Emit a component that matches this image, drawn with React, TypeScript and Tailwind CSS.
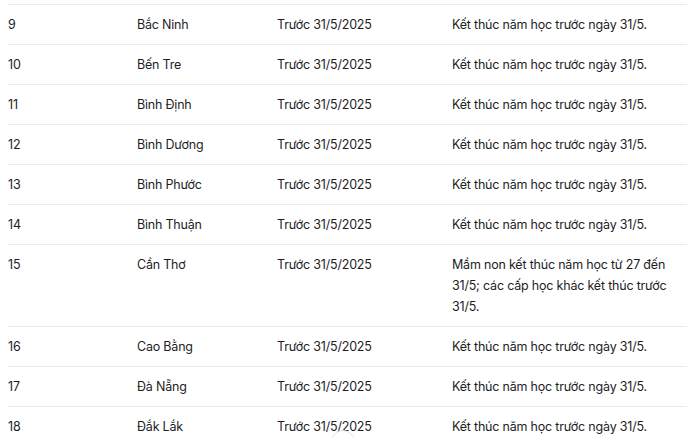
const rows: [string, string, string, string][] = [
  ["9", "Bắc Ninh", "Trước 31/5/2025", "Kết thúc năm học trước ngày 31/5."],
  ["10", "Bến Tre", "Trước 31/5/2025", "Kết thúc năm học trước ngày 31/5."],
  ["11", "Bình Định", "Trước 31/5/2025", "Kết thúc năm học trước ngày 31/5."],
  ["12", "Bình Dương", "Trước 31/5/2025", "Kết thúc năm học trước ngày 31/5."],
  ["13", "Bình Phước", "Trước 31/5/2025", "Kết thúc năm học trước ngày 31/5."],
  ["14", "Bình Thuận", "Trước 31/5/2025", "Kết thúc năm học trước ngày 31/5."],
  [
    "15",
    "Cần Thơ",
    "Trước 31/5/2025",
    "Mầm non kết thúc năm học từ 27 đến 31/5; các cấp học khác kết thúc trước 31/5.",
  ],
  ["16", "Cao Bằng", "Trước 31/5/2025", "Kết thúc năm học trước ngày 31/5."],
  ["17", "Đà Nẵng", "Trước 31/5/2025", "Kết thúc năm học trước ngày 31/5."],
  ["18", "Đắk Lắk", "Trước 31/5/2025", "Kết thúc năm học trước ngày 31/5."],
];

export default function App() {
  return (
    <div
      className="relative h-[438px] w-[700px] overflow-hidden bg-white text-[12.5px] leading-[21px] tracking-[-0.2px] text-[#1d1d1f]"
      style={{ fontFamily: 'Inter, "Noto Sans", sans-serif' }}
    >
      <div className="ml-2 mt-1 w-[679px]">
        {rows.map((row) => (
          <div
            key={row[0]}
            className="grid grid-cols-[129px_140px_175px_235px] border-t border-[#ebebeb] py-[9px]"
          >
            <div>{row[0]}</div>
            <div>{row[1]}</div>
            <div>{row[2]}</div>
            <div className="max-w-[218px]">{row[3]}</div>
          </div>
        ))}
      </div>
      {/* scroll button peeking from the bottom */}
      <div className="absolute left-[331px] top-[430px] h-6 w-6 rounded-full border border-[#e2e2e2] bg-white/60" />
    </div>
  );
}
